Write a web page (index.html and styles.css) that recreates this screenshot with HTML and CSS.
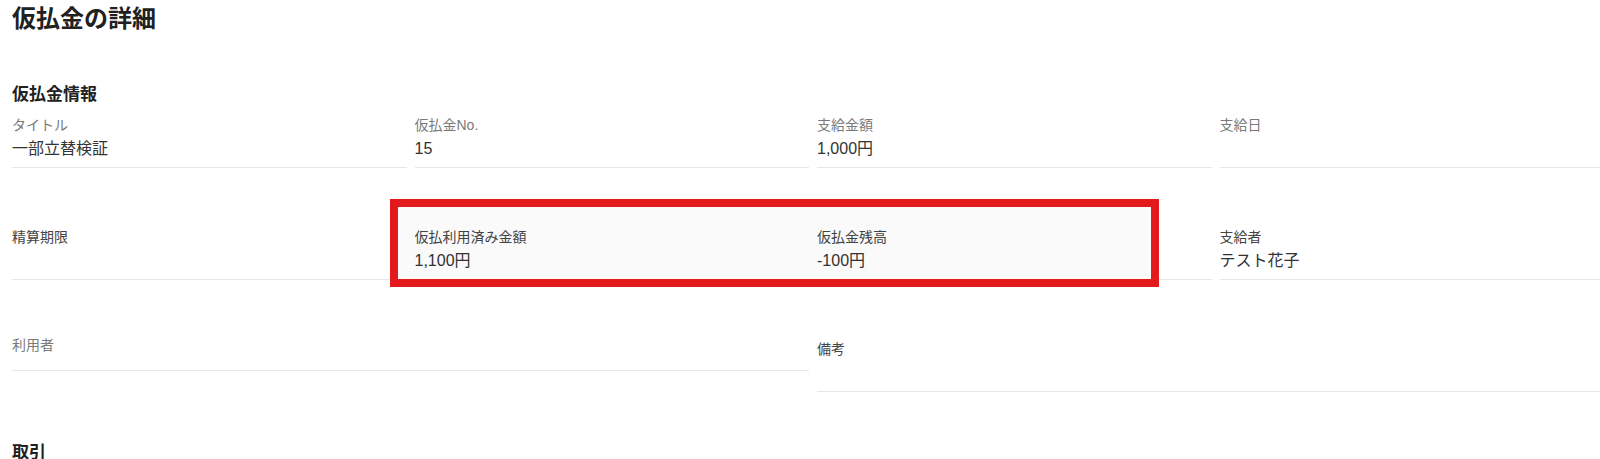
FILE: index.html
```html
<!DOCTYPE html>
<html lang="ja">

<head>
    <meta charset="UTF-8">
    <meta name="viewport" content="width=device-width, initial-scale=1.0">
    <title>仮払金の詳細</title>

    <link rel="stylesheet" href="styles.css">

</head>

<body>

    <h1 class="page-header">仮払金の詳細</h1>

    <h2 class="section-header">仮払金情報</h2>

    <!-- 1行目 -->
    <div class="field-row">
        <div class="field">
            <div class="field-label">タイトル</div>
            <div class="field-value">一部立替検証</div>
        </div>
        <div class="field">
            <div class="field-label">仮払金No.</div>
            <div class="field-value">15</div>
        </div>
        <div class="field">
            <div class="field-label">支給金額</div>
            <div class="field-value">1,000円</div>
        </div>
        <div class="field">
            <div class="field-label">支給日</div>
            <div class="field-value"></div>
        </div>
    </div>

    <!-- 2行目 -->
    <div class="field-row second">
        <div class="field">
            <div class="field-label dark">精算期限</div>
            <div class="field-value"></div>
        </div>
        <div class="field">
            <div class="field-label dark">仮払利用済み金額</div>
            <div class="field-value">1,100円</div>
        </div>
        <div class="field">
            <div class="field-label dark">仮払金残高</div>
            <div class="field-value">-100円</div>
        </div>
        <div class="field">
            <div class="field-label dark">支給者</div>
            <div class="field-value">テスト花子</div>
        </div>

        <!-- 強調枠 -->
        <div class="highlight-box"></div>
    </div>

    <!-- 3行目 -->
    <div class="field-row third">
        <div class="field wide no-value">
            <div class="field-label">利用者</div>
        </div>
        <div class="field wide note">
            <div class="field-label dark">備考</div>
            <div class="field-value"></div>
        </div>
    </div>

    <h2 class="section-header deals">取引</h2>

</body>

</html>
```

FILE: styles.css
```css
/* ページ全体 */
html {
    overflow: hidden;
}

body {
    margin: 0;
    padding: 0 12px;
    background-color: #ffffff;
    color: #212121;
    font-family: "Liberation Sans", "Noto Sans CJK JP", sans-serif;
}

/* 見出し */
.page-header {
    margin: 1px 0 0;
    font-size: 24px;
    line-height: 36px;
    font-weight: bold;
    color: #212121;
}

.section-header {
    margin: 46px 0 0;
    font-size: 17px;
    line-height: 24px;
    font-weight: bold;
    color: #212121;
}

.section-header.deals {
    margin-top: 49px;
}

/* 項目の並び */
.field-row {
    position: relative;
    display: grid;
    grid-template-columns: repeat(4, 394.5px);
    column-gap: 8px;
    align-items: start;
    margin-top: 8px;
}

.field-row.second {
    margin-top: 59px;
}

.field-row.third {
    margin-top: 55px;
}

/* 各項目 */
.field {
    padding-bottom: 6px;
    border-bottom: 1px solid #e4e7ea;
}

.field.wide {
    grid-column: span 2;
}

.field.no-value {
    padding-bottom: 13px;
}

.field.note {
    margin-top: 4px;
}

.field-label {
    margin-bottom: 2px;
    font-size: 14px;
    line-height: 20px;
    color: #7a7a7a;
}

.field-label.dark {
    color: #444444;
}

.field-value {
    min-height: 24px;
    font-size: 16px;
    line-height: 24px;
    color: #333333;
}

/* 赤い強調枠 */
.highlight-box {
    position: absolute;
    top: -28px;
    left: 378px;
    width: 769px;
    height: 88px;
    box-sizing: border-box;
    border: 8px solid #e31a1c;
    background-color: rgba(0, 0, 0, 0.02);
    pointer-events: none;
}
```
